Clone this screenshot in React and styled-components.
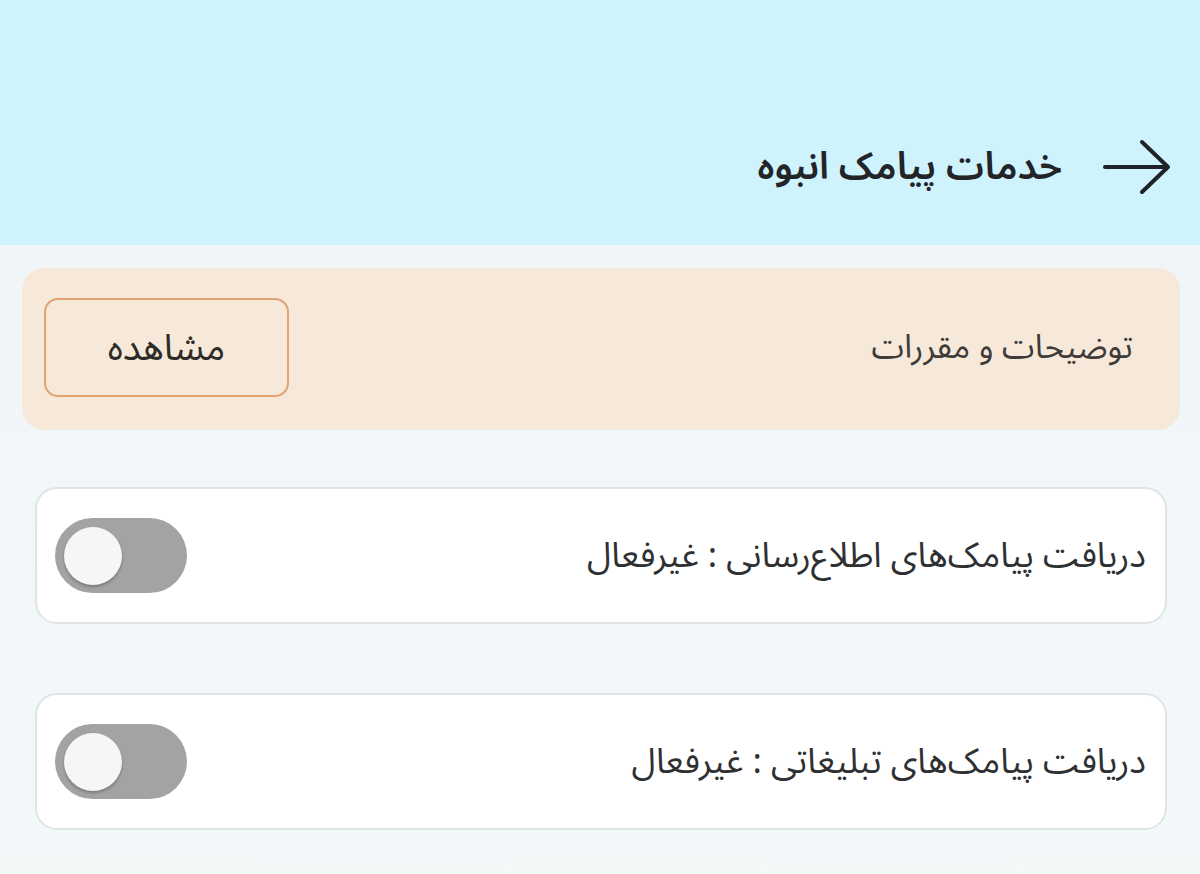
import React from "react";
import styled, { createGlobalStyle } from "styled-components";

const Global = createGlobalStyle`
  html, body { margin: 0; padding: 0; }
  body {
    background: #f2f7f9;
    font-family: "Noto Sans Arabic", "DejaVu Sans", sans-serif;
    direction: rtl;
  }
`;

const Page = styled.div`
  width: 1200px;
  min-height: 874px;
  background: linear-gradient(#eff5f8, #f3f8f9);
  display: flex;
  flex-direction: column;
`;

const Header = styled.header`
  height: 245px;
  background: #cff3fd;
  display: flex;
  align-items: center;
  gap: 40px;
  padding: 88px 28px 0;
  box-sizing: border-box;
`;

const BackButton = styled.button`
  border: none;
  background: none;
  padding: 0;
  display: flex;
  cursor: pointer;
`;

const Title = styled.h1`
  margin: 0;
  font-size: 38px;
  font-weight: 600;
  color: #222428;
`;

const Content = styled.main`
  display: flex;
  flex-direction: column;
  padding: 23px 20px 0 22px;
`;

const InfoCard = styled.section`
  height: 162px;
  background: #f6e9da;
  border-radius: 22px;
  display: flex;
  align-items: center;
  justify-content: space-between;
  padding: 0 47px 3px 22px;
  box-sizing: border-box;
  margin-bottom: 57px;
`;

const InfoText = styled.span`
  font-size: 33px;
  color: #3f3b38;
`;

const ViewButton = styled.button`
  width: 245px;
  height: 99px;
  border: 2px solid #e2a271;
  border-radius: 14px;
  background: #f6e9da;
  font-family: inherit;
  font-size: 37px;
  color: #2e2b29;
  cursor: pointer;
`;

const SettingCard = styled.div`
  margin: 0 13px ${(p) => (p.$last ? "0" : "69px")} 13px;
  height: 137px;
  background: #ffffff;
  border: 2px solid #dfe4e7;
  border-radius: 22px;
  display: flex;
  align-items: center;
  justify-content: space-between;
  padding: 0 19px 0 18px;
  box-sizing: border-box;
`;

const SettingText = styled.span`
  font-size: 35px;
  color: #2f3032;
`;

const Toggle = styled.button`
  position: relative;
  width: 132px;
  height: 75px;
  border: none;
  border-radius: 38px;
  background: #a3a3a6;
  padding: 0;
  cursor: pointer;
`;

const Knob = styled.span`
  position: absolute;
  top: 9px;
  left: 9px;
  width: 58px;
  height: 58px;
  border-radius: 50%;
  background: #f6f6f7;
  box-shadow: 0 2px 3px rgba(0, 0, 0, 0.25);
`;

const settings = [
  "دریافت پیامک‌های اطلاع‌رسانی : غیرفعال",
  "دریافت پیامک‌های تبلیغاتی : غیرفعال",
];

export default function App() {
  return (
    <>
      <Global />
      <Page>
        <Header>
          <BackButton aria-label="بازگشت">
            <svg width="70" height="56" viewBox="0 0 70 56" fill="none">
              <path
                d="M3 28 H66 M40 3 L66 28 L40 53"
                stroke="#1f2226"
                strokeWidth="4"
                strokeLinecap="round"
                strokeLinejoin="round"
              />
            </svg>
          </BackButton>
          <Title>خدمات پیامک انبوه</Title>
        </Header>
        <Content>
          <InfoCard>
            <InfoText>توضیحات و مقررات</InfoText>
            <ViewButton>مشاهده</ViewButton>
          </InfoCard>
          {settings.map((s, i) => (
            <SettingCard key={s} $last={i === settings.length - 1}>
              <SettingText>{s}</SettingText>
              <Toggle aria-label="toggle">
                <Knob />
              </Toggle>
            </SettingCard>
          ))}
        </Content>
      </Page>
    </>
  );
}
